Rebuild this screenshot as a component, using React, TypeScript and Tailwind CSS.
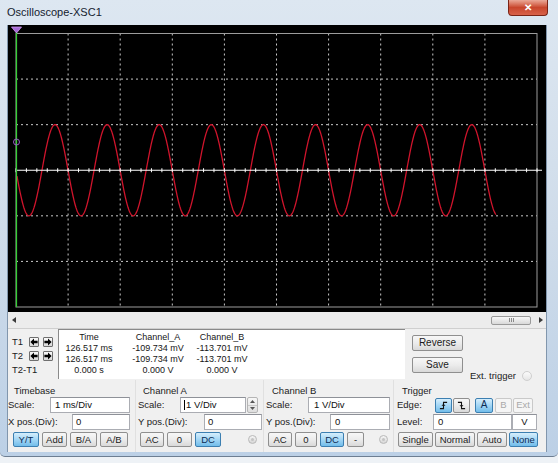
import React from "react";

const GL = 16;
const GR = 537;
const GT = 33.5;
const GB = 307;
const DX = (GR - GL) / 10;
const DY = (GB - GT) / 6;
const MID = (GT + GB) / 2;

function sinePath() {
  let d = "";
  for (let x = 17; x <= 496; x += 0.5) {
    const y = MID - DY * Math.cos((2 * Math.PI * (x - 55)) / DX);
    d += (x === 17 ? "M" : "L") + x.toFixed(1) + " " + y.toFixed(2) + " ";
  }
  return d;
}

function Screen() {
  const vLines = Array.from({ length: 9 }, (_, i) => GL + (i + 1) * DX);
  const hLines = [1, 2, 4, 5].map((j) => GT + j * DY);
  const ticks = Array.from({ length: 51 }, (_, k) => GL + (k * DX) / 5);
  return (
    <svg width="538" height="287" viewBox="8 25 538 287" className="block">
      <rect x="8" y="25" width="538" height="287" fill="#000" />
      {vLines.map((x) => (
        <line key={x} x1={x} y1={GT} x2={x} y2={GB} stroke="#c9c9c9" strokeWidth="1" strokeDasharray="2 3" />
      ))}
      {hLines.map((y) => (
        <line key={y} x1={GL} y1={y} x2={GR} y2={y} stroke="#c9c9c9" strokeWidth="1" strokeDasharray="2 3" />
      ))}
      <rect x={GL} y={GT} width={GR - GL} height={GB - GT} fill="none" stroke="#9c9c9c" strokeWidth="1" />
      <path d={sinePath()} fill="none" stroke="#d0142c" strokeWidth="1.3" />
      <line x1={GL} y1={MID} x2={542} y2={MID} stroke="#ffffff" strokeWidth="1.2" />
      {ticks.map((x) => (
        <line key={x} x1={x} y1={MID - 2} x2={x} y2={MID + 2} stroke="#ffffff" strokeWidth="1" />
      ))}
      <line x1={16.5} y1={28} x2={16.5} y2={GB} stroke="#35d035" strokeWidth="1.2" />
      <polygon points="11.5,27 21.5,27 16.5,33" fill="#a66ad6" stroke="#d29cf5" strokeWidth="0.8" />
      <circle cx="16.5" cy="142" r="3" fill="none" stroke="#9b5cc8" strokeWidth="1" />
    </svg>
  );
}

function Btn({
  children,
  className,
  active,
  disabled,
}: {
  children: React.ReactNode;
  className: string;
  active?: boolean;
  disabled?: boolean;
}) {
  const tone = active
    ? "border-[#3c7fb1] bg-gradient-to-b from-[#d6eefc] via-[#a3d6f5] to-[#72bdea] text-[#0d2c55]"
    : disabled
      ? "border-[#c9c9c9] bg-[#f5f5f5] text-[#a9a9a9]"
      : "border-[#8f8f8f] bg-gradient-to-b from-[#f7f7f7] via-[#ececec] to-[#d9d9d9] text-[#1b1b1b]";
  return (
    <div className={`h-[15px] flex items-center justify-center rounded-[2px] border text-[9.5px] leading-none shrink-0 ${tone} ${className}`}>
      {children}
    </div>
  );
}

function Field({ className, children }: { className: string; children?: React.ReactNode }) {
  return (
    <div className={`h-[16px] bg-white border border-[#abadb3] border-t-[#8e9198] flex items-center text-[9.5px] text-[#111] shrink-0 ${className}`}>
      {children}
    </div>
  );
}

function Radio() {
  return (
    <div className="w-[9px] h-[9px] rounded-full border border-[#b8b8b8] bg-gradient-to-b from-[#f6f6f6] to-[#d6d6d6] flex items-center justify-center shrink-0">
      <div className="w-[3px] h-[3px] rounded-full bg-[#c3c3c3]" />
    </div>
  );
}

function ArrowBtn({ dir }: { dir: "l" | "r" }) {
  return (
    <div className="w-[10px] h-[10px] border border-[#6f6f6f] rounded-[1px] bg-gradient-to-b from-[#fafafa] to-[#d8d8d8] flex items-center justify-center">
      <svg width="8" height="8" viewBox="0 0 10 10">
        <polygon
          points={dir === "l" ? "0.5,5 5,0.5 5,3.3 9.5,3.3 9.5,6.7 5,6.7 5,9.5" : "9.5,5 5,0.5 5,3.3 0.5,3.3 0.5,6.7 5,6.7 5,9.5"}
          fill="#000"
        />
      </svg>
    </div>
  );
}

function EdgeIcon({ rising }: { rising: boolean }) {
  return (
    <svg width="9" height="9" viewBox="0 0 10 10">
      <path d={rising ? "M1 8.5 H5 V1.5 H9" : "M1 1.5 H5 V8.5 H9"} fill="none" stroke="#111" strokeWidth="1.2" />
      <path d={rising ? "M3.3 5.5 L5 3.5 L6.7 5.5" : "M3.3 4.5 L5 6.5 L6.7 4.5"} fill="none" stroke="#111" strokeWidth="1" />
    </svg>
  );
}

export default function App() {
  const label = "text-[9.5px] text-[#1b1b1b] shrink-0";
  return (
    <div className="w-[558px] h-[463px] overflow-hidden bg-[#eef2f6] font-['Liberation_Sans',Arial,sans-serif]">
      <div className="h-[457px] flex flex-col rounded-b-[5px] border-b border-[#6d7e92] bg-gradient-to-b from-[#dde7f1] via-[#cfdcea] to-[#bcd0e6]">
        {/* title bar */}
        <div className="h-[25px] flex justify-between items-start shrink-0">
          <span className="pl-[7px] pt-[6px] text-[11px] leading-[13px] text-[#15212e]">Oscilloscope-XSC1</span>
          <div className="mr-[10px] w-[40px] h-[16px] rounded-b-[4px] border border-t-0 border-[#7a2416] bg-gradient-to-b from-[#eaa897] via-[#c8462c] to-[#d8624a] flex items-center justify-center text-white text-[10px] font-bold leading-none">
            ✕
          </div>
        </div>

        <div className="h-[427px] flex shrink-0">
          <div className="w-[7px]" />
          <div className="w-[540px] border-x border-[#8196ad] bg-[#f0f0f0] flex flex-col">
            <Screen />

            {/* scrollbar */}
            <div className="h-[16px] flex items-center bg-[#ececec]">
              <svg width="4" height="6" viewBox="0 0 4 6" className="ml-[4px]">
                <polygon points="4,0 0,3 4,6" fill="#3a3a3a" />
              </svg>
              <div className="flex-1" />
              <div className="w-[40px] h-[9px] rounded-[2px] border border-[#9a9a9a] bg-gradient-to-b from-[#f8f8f8] to-[#d9d9d9] flex items-center justify-center gap-[1px]">
                <div className="w-px h-[4px] bg-[#8a8a8a]" />
                <div className="w-px h-[4px] bg-[#8a8a8a]" />
                <div className="w-px h-[4px] bg-[#8a8a8a]" />
              </div>
              <svg width="4" height="6" viewBox="0 0 4 6" className="ml-[8px] mr-[3px]">
                <polygon points="0,0 4,3 0,6" fill="#3a3a3a" />
              </svg>
            </div>

            {/* cursor readout */}
            <div className="h-[52px] flex border-t border-[#cfcfcf] shrink-0">
              <div className="w-[50px] pt-[6px] flex flex-col text-[9.5px] text-[#1b1b1b]">
                <div className="h-[14px] flex items-center">
                  <span className="pl-[4px] w-[21px]">T1</span>
                  <div className="flex gap-[4px]">
                    <ArrowBtn dir="l" />
                    <ArrowBtn dir="r" />
                  </div>
                </div>
                <div className="h-[14px] flex items-center">
                  <span className="pl-[4px] w-[21px]">T2</span>
                  <div className="flex gap-[4px]">
                    <ArrowBtn dir="l" />
                    <ArrowBtn dir="r" />
                  </div>
                </div>
                <div className="h-[14px] flex items-center pl-[4px]">T2-T1</div>
              </div>
              <div className="w-[347px] h-[50px] bg-white border-l border-t border-[#8a8a8a] flex pt-[2px] text-[9px] leading-[11px] text-[#161616]">
                <div className="w-[60px] flex flex-col items-center whitespace-nowrap">
                  <span>Time</span>
                  <span>126.517 ms</span>
                  <span>126.517 ms</span>
                  <span>0.000 s</span>
                </div>
                <div className="w-[78px] flex flex-col items-center whitespace-nowrap">
                  <span>Channel_A</span>
                  <span>-109.734 mV</span>
                  <span>-109.734 mV</span>
                  <span>0.000 V</span>
                </div>
                <div className="w-[50px] flex flex-col items-center whitespace-nowrap">
                  <span>Channel_B</span>
                  <span>-113.701 mV</span>
                  <span>-113.701 mV</span>
                  <span>0.000 V</span>
                </div>
              </div>
              <div className="flex-1 flex">
                <div className="pl-[7px] pt-[6px] flex flex-col gap-[6px]">
                  <Btn className="w-[51px] h-[16px] text-[10px]">Reverse</Btn>
                  <Btn className="w-[51px] h-[16px] text-[10px]">Save</Btn>
                </div>
                <div className="self-end mb-[-2px] ml-[7px] flex items-center h-[12px]">
                  <span className="text-[9.5px] text-[#1b1b1b] whitespace-nowrap">Ext. trigger</span>
                  <div className="ml-[6px] w-[10px] h-[10px] rounded-full border border-[#cfcfcf] bg-gradient-to-b from-[#fbfbfb] to-[#e6e6e6]" />
                </div>
              </div>
            </div>

            {/* control groups */}
            <div className="h-[72px] flex shrink-0">
              {/* Timebase */}
              <div className="w-[127px] flex flex-col">
                <div className={`pt-[4px] h-[17px] pl-[6px] leading-[13px] ${label}`}>Timebase</div>
                <div className="h-[16px] flex items-center">
                  <span className={`w-[42px] ${label}`}>Scale:</span>
                  <Field className="w-[80px] pl-[4px]">1 ms/Div</Field>
                </div>
                <div className="h-[16px] flex items-center mt-[1px]">
                  <span className={`w-[64px] ${label}`}>X pos.(Div):</span>
                  <Field className="w-[58px] pl-[3px]">0</Field>
                </div>
                <div className="mt-[2px] pl-[5px] flex gap-[3px]">
                  <Btn className="w-[26px]" active>Y/T</Btn>
                  <Btn className="w-[25px]">Add</Btn>
                  <Btn className="w-[27px]">B/A</Btn>
                  <Btn className="w-[28px]">A/B</Btn>
                </div>
              </div>

              {/* Channel A */}
              <div className="w-[128px] flex flex-col border-l border-[#e0e0e0]">
                <div className={`pt-[4px] h-[17px] pl-[7px] leading-[13px] ${label}`}>Channel A</div>
                <div className="h-[16px] flex items-center pl-[2px]">
                  <span className={`w-[42px] ${label}`}>Scale:</span>
                  <Field className="w-[66px] pl-[3px]">
                    <span className="w-px h-[10px] bg-black mr-[1px]" />1 V/Div
                  </Field>
                  <div className="ml-[1px] w-[11px] h-[16px] flex flex-col border border-[#b5b5b5] rounded-[2px] bg-gradient-to-b from-[#f7f7f7] to-[#dedede]">
                    <div className="flex-1 flex items-center justify-center border-b border-[#c8c8c8]">
                      <svg width="5" height="3" viewBox="0 0 5 3"><polygon points="0,3 2.5,0 5,3" fill="#555" /></svg>
                    </div>
                    <div className="flex-1 flex items-center justify-center">
                      <svg width="5" height="3" viewBox="0 0 5 3"><polygon points="0,0 2.5,3 5,0" fill="#555" /></svg>
                    </div>
                  </div>
                </div>
                <div className="h-[16px] flex items-center pl-[2px] mt-[1px]">
                  <span className={`w-[66px] ${label}`}>Y pos.(Div):</span>
                  <Field className="w-[58px] pl-[3px]">0</Field>
                </div>
                <div className="mt-[2px] pl-[4px] flex items-center gap-[3px]">
                  <Btn className="w-[24px]">AC</Btn>
                  <Btn className="w-[25px]">0</Btn>
                  <Btn className="w-[26px]" active>DC</Btn>
                  <div className="ml-[24px]">
                    <Radio />
                  </div>
                </div>
              </div>

              {/* Channel B */}
              <div className="w-[130px] flex flex-col border-l border-[#e0e0e0]">
                <div className={`pt-[4px] h-[17px] pl-[8px] leading-[13px] ${label}`}>Channel B</div>
                <div className="h-[16px] flex items-center pl-[2px]">
                  <span className={`w-[42px] ${label}`}>Scale:</span>
                  <Field className="w-[82px] pl-[5px]">1 V/Div</Field>
                </div>
                <div className="h-[16px] flex items-center pl-[2px] mt-[1px]">
                  <span className={`w-[64px] ${label}`}>Y pos.(Div):</span>
                  <Field className="w-[60px] pl-[4px]">0</Field>
                </div>
                <div className="mt-[2px] pl-[4px] flex items-center gap-[3px]">
                  <Btn className="w-[24px]">AC</Btn>
                  <Btn className="w-[22px]">0</Btn>
                  <Btn className="w-[24px]" active>DC</Btn>
                  <Btn className="w-[17px]">-</Btn>
                  <div className="ml-[12px]">
                    <Radio />
                  </div>
                </div>
              </div>

              {/* Trigger */}
              <div className="w-[153px] flex flex-col border-l border-[#e0e0e0]">
                <div className={`pt-[4px] h-[17px] pl-[8px] leading-[13px] ${label}`}>Trigger</div>
                <div className="h-[16px] flex items-center pl-[3px]">
                  <span className={`w-[38px] ${label}`}>Edge:</span>
                  <Btn className="w-[17px] h-[14px]" active>
                    <EdgeIcon rising />
                  </Btn>
                  <Btn className="w-[17px] h-[14px] ml-[1px]">
                    <EdgeIcon rising={false} />
                  </Btn>
                  <Btn className="w-[18px] h-[14px] ml-[5px] text-[10px]" active>A</Btn>
                  <Btn className="w-[17px] h-[14px] ml-[2px]" disabled>B</Btn>
                  <Btn className="w-[20px] h-[14px] ml-[1px]" disabled>Ext</Btn>
                </div>
                <div className="h-[16px] flex items-center pl-[3px] mt-[1px]">
                  <span className={`w-[36px] ${label}`}>Level:</span>
                  <Field className="w-[79px] pl-[4px]">0</Field>
                  <Field className="w-[25px] justify-center">V</Field>
                </div>
                <div className="mt-[2px] pl-[4px] flex gap-[2px]">
                  <Btn className="w-[35px]">Single</Btn>
                  <Btn className="w-[40px]">Normal</Btn>
                  <Btn className="w-[30px]">Auto</Btn>
                  <Btn className="w-[29px]" active>None</Btn>
                </div>
              </div>
            </div>
          </div>
          <div className="w-[11px]" />
        </div>
      </div>
    </div>
  );
}
